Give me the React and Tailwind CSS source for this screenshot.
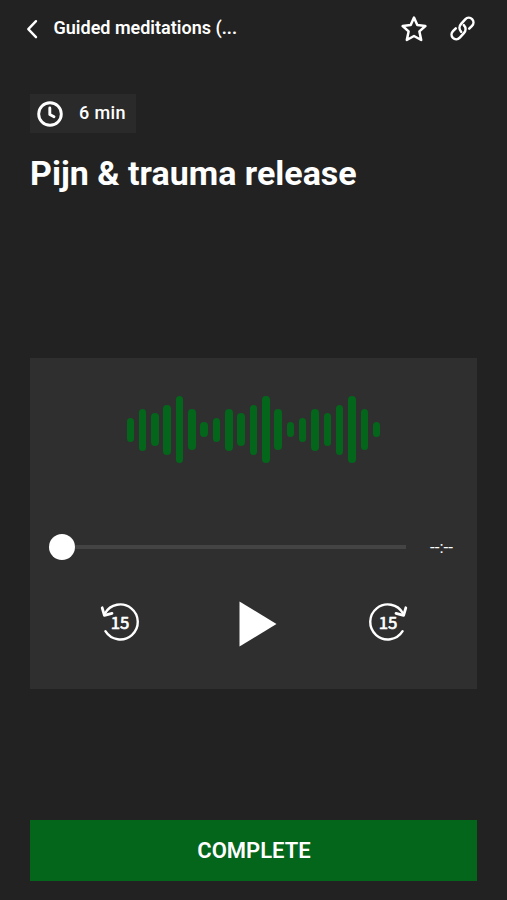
const WAVE = [24, 42, 33, 50, 67, 41, 15];
const BARS = [...WAVE, ...WAVE, ...WAVE];

function Skip({ forward }) {
  return (
    <svg width="42" height="42" viewBox="0 0 42 42" fill="none" stroke="#fff" strokeWidth="2.4" strokeLinecap="round" strokeLinejoin="round">
      <g transform={forward ? 'translate(42 0) scale(-1 1)' : undefined}>
        <path d="M6.4 30.2A17.5 17.5 0 1 0 6 12.4" />
        <path d="M3.2 6.8L5.4 14.4L13 12.4" strokeWidth="2.8" />
      </g>
      <text x="21" y="27.8" textAnchor="middle" fill="#fff" stroke="#fff" strokeWidth="0.7" fontSize="16.8" fontWeight="400" fontFamily="'Noto Sans CJK SC', sans-serif">15</text>
    </svg>
  );
}

export default function App() {
  return (
    <div className="flex h-[900px] w-[507px] flex-col overflow-hidden bg-[#222222] font-['Roboto',sans-serif] text-white">
      <header className="flex h-[57px] items-center pr-[31px] pl-[25px]">
        <svg width="14" height="20" viewBox="0 0 14 20" fill="none" stroke="#fff" strokeWidth="2.4" strokeLinecap="round" strokeLinejoin="round">
          <path d="M11 2.2L3.3 10.2L11 18.2" />
        </svg>
        <h2 className="mb-[2px] ml-[14.5px] text-[18px] leading-6 font-semibold whitespace-nowrap">Guided meditations (...</h2>
        <div className="ml-auto flex items-center gap-[21px]">
          <svg width="28" height="28" viewBox="0 0 28 28" fill="none" stroke="#fff" strokeWidth="2.5" strokeLinejoin="round">
            <path d="M14 2.6L17.3 10.1L25.4 11L19.4 16.4L21.2 25L14 21L6.8 25L8.6 16.4L2.6 11L10.7 10.1Z" />
          </svg>
          <svg width="27" height="27" viewBox="0 0 27 27" fill="none" stroke="#fff" strokeWidth="2.5" strokeLinecap="round" strokeLinejoin="round">
            <path d="M12.2 16.8C9.9 14.4 10 11.2 12.1 8.9L16.2 4.4C18.2 2.3 21.3 2.4 23.1 4.1C24.9 5.9 24.9 8.8 23 10.8L20.2 13.7" />
            <path d="M14.8 10.2C17.1 12.6 17 15.8 14.9 18.1L10.8 22.6C8.8 24.7 5.7 24.6 3.9 22.9C2.1 21.1 2.1 18.2 4 16.2L6.8 13.3" />
          </svg>
        </div>
      </header>

      <main className="flex flex-1 flex-col px-[30px] pt-[37px]">
        <div className="flex h-[39px] w-[106px] items-center bg-[#2a2a2a] pl-[6px]">
          <svg width="28" height="28" viewBox="0 0 28 28" fill="none" stroke="#fff" strokeWidth="2.9" strokeLinecap="round" strokeLinejoin="round">
            <circle cx="14" cy="14" r="11.3" />
            <path d="M13.8 8V14.5L18 16.7" />
          </svg>
          <span className="mb-[1px] ml-[15px] text-[18px] leading-6 font-medium tracking-[0.4px] whitespace-nowrap">6 min</span>
        </div>
        <h1 className="mt-[19px] text-[34px] leading-[42px] font-bold whitespace-nowrap">Pijn &amp; trauma release</h1>

        <section className="mt-[164px] flex h-[331px] w-[447px] flex-col bg-[#2f2f2f]">
          <div className="mx-auto mt-[38px] flex h-[67px] w-[254px] items-center justify-between">
            {BARS.map((h, i) => (
              <span key={i} className="w-[7.4px] rounded-full bg-[#03661b]" style={{ height: h }} />
            ))}
          </div>
          <div className="mt-[71px] flex h-[26px] items-center pl-[19px]">
            <span className="size-[26px] rounded-full bg-white" />
            <span className="h-[4px] w-[331px] bg-[#444444]" />
            <span className="ml-[24px] text-[17px] leading-5 whitespace-nowrap">--:--</span>
          </div>
          <div className="mt-[38px] flex h-[48px] items-center pl-[69px]">
            <Skip />
            <svg width="38" height="46" viewBox="0 0 38 46" className="mt-[4px] ml-[98px]">
              <path d="M0.5 0.5V45.5L37.5 23Z" fill="#fff" />
            </svg>
            <span className="ml-[90px]"><Skip forward /></span>
          </div>
        </section>

        <button className="mt-[130.5px] flex h-[61px] w-[447px] items-center justify-center bg-[#03661b] pl-[1px] text-[22px] font-semibold">COMPLETE</button>
      </main>
    </div>
  );
}
